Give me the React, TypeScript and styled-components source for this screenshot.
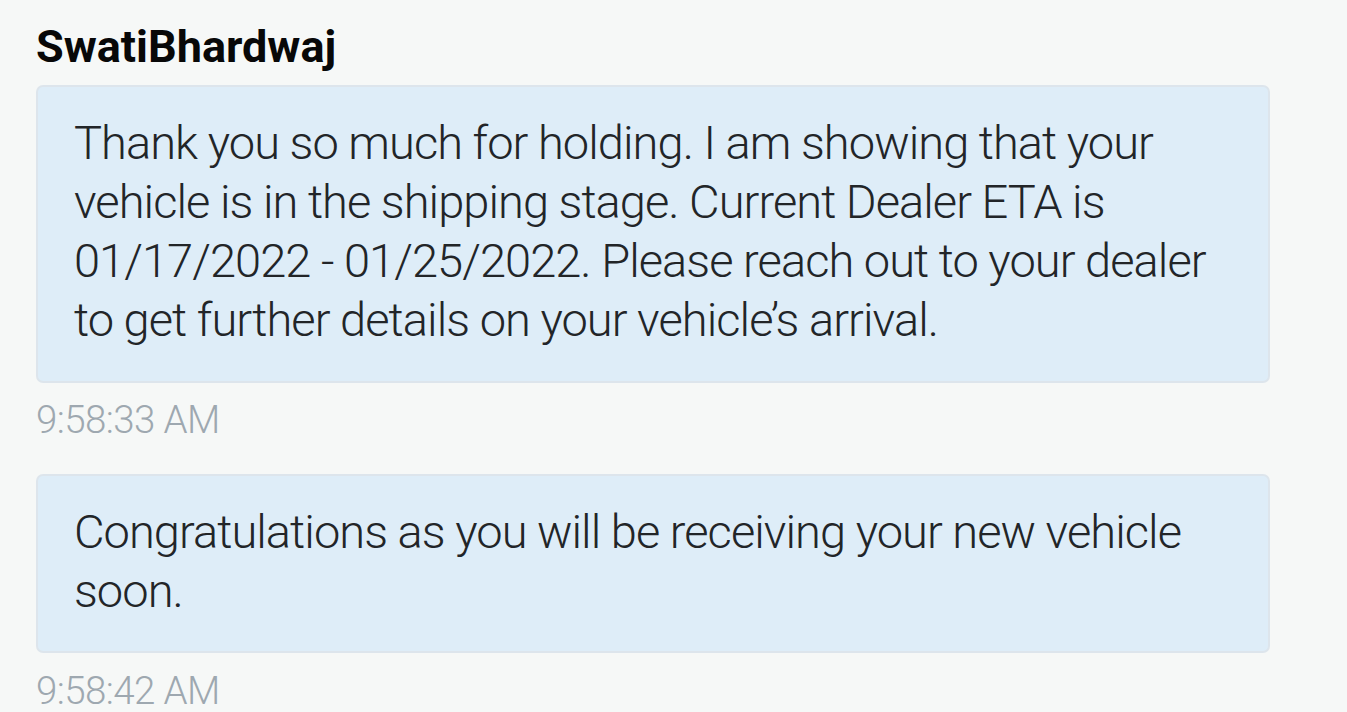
import styled, { createGlobalStyle } from "styled-components";

const GlobalStyle = createGlobalStyle`
  html, body {
    margin: 0;
    padding: 0;
    background: #f6f8f7;
  }
  body {
    font-family: Roboto, "Noto Sans", sans-serif;
  }
`;

type Message = {
  text: string;
  time: string;
};

const messages: Message[] = [
  {
    text:
      "Thank you so much for holding. I am showing that your vehicle is in the shipping stage. Current Dealer ETA is 01/17/2022 - 01/25/2022. Please reach out to your dealer to get further details on your vehicle\u2019s arrival.",
    time: "9:58:33 AM",
  },
  {
    text: "Congratulations as you will be receiving your new vehicle soon.",
    time: "9:58:42 AM",
  },
];

const App = () => {
  return (
    <>
      <GlobalStyle />
      <Thread>
        <Sender>SwatiBhardwaj</Sender>
        {messages.map((m) => (
          <MessageGroup key={m.time}>
            <Bubble>{m.text}</Bubble>
            <Time>{m.time}</Time>
          </MessageGroup>
        ))}
      </Thread>
    </>
  );
};

export default App;

const Thread = styled.div`
  display: flex;
  flex-direction: column;
  padding: 22px 77px 0 36px;
  height: 712px;
  box-sizing: border-box;
  overflow: hidden;
`;

const Sender = styled.div`
  color: #080808;
  font-size: 45px;
  font-weight: 700;
  line-height: 50px;
  margin-bottom: 13px;
`;

const MessageGroup = styled.div`
  display: flex;
  flex-direction: column;
  margin-bottom: 28.5px;
`;

const Bubble = styled.div`
  background: #deedf8;
  border: 2px solid #dde5ec;
  border-radius: 7px;
  padding: 26px 36px 31.5px;
  color: #222528;
  font-size: 47px;
  font-weight: 300;
  letter-spacing: -0.95px;
  line-height: 59px;
`;

const Time = styled.div`
  color: #9ea8b0;
  font-size: 38.5px;
  font-weight: 300;
  letter-spacing: -0.6px;
  line-height: 50px;
  margin-top: 12.5px;
`;
